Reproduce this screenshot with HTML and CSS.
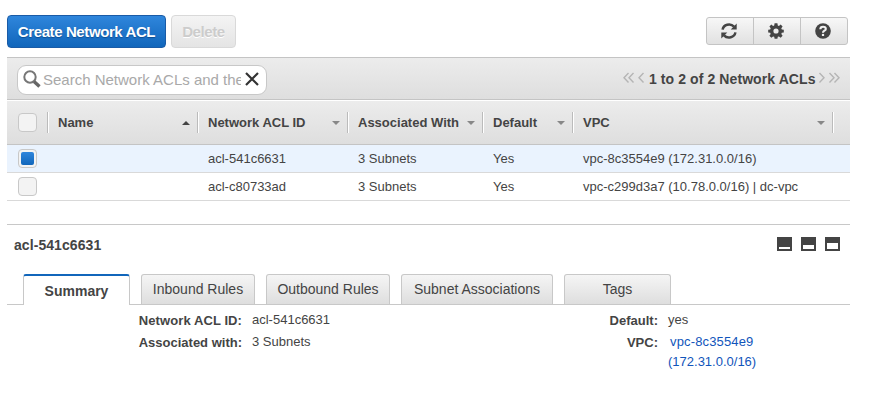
FILE: index.html
```html
<!DOCTYPE html>
<html lang="en">
<head>
<meta charset="utf-8">
<title>Network ACLs</title>
<link rel="stylesheet" href="styles.css">
</head>
<body>
<main class="console">
  <header class="actions">
    <button class="btn btn-primary">Create Network ACL</button>
    <button class="btn btn-disabled" disabled>Delete</button>
    <div class="tools">
      <button class="tool" aria-label="Refresh"><svg width="16" height="16" viewBox="0 0 16 16"><path d="M1.600 6.600A6.500 6 0 0 1 13 3.600M14.400 9.400A6.500 6 0 0 1 3 12.400" fill="none" stroke="#444" stroke-width="2.500"/><path d="M15.700 .6V6.600H9.700zM.3 15.400V9.400h6z" fill="#444"/></svg></button>
      <button class="tool" aria-label="Settings"><svg width="16" height="16" viewBox="0 0 16 16"><path fill="#444" fill-rule="evenodd" d="M6.600.3h2.800l.4 2.100 1.100.5 1.800-1.300 1.900 1.900-1.300 1.800.5 1.100 2 .4v2.600l-2 .4-.5 1.200 1.300 1.700-1.900 2-1.800-1.300-1.100.4-.4 2H6.600l-.4-2-1.100-.4-1.800 1.300-1.900-2L2.700 11l-.5-1.200-2-.4V6.800l2-.4.5-1.100-1.300-1.800 1.900-1.900 1.800 1.300 1.100-.5zM8 5.400a2.600 2.600 0 1 0 0 5.200 2.600 2.600 0 0 0 0-5.200z"/></svg></button>
      <button class="tool" aria-label="Help"><svg width="16" height="16" viewBox="0 0 16 16"><circle cx="8" cy="8" r="7.800" fill="#444"/><path d="M5.300 6.200C5.400 4.300 6.500 3.700 8 3.700c1.700 0 2.800.8 2.800 2.200C10.800 7.700 8 7.700 8 9.700" fill="none" stroke="#f1f1f1" stroke-width="2.100"/><path d="M6.900 10.900h2.200v2.100H6.900z" fill="#f1f1f1"/></svg></button>
    </div>
  </header>

  <section class="filterbar">
    <label class="search">
      <svg class="magnifier" width="18" height="18" viewBox="0 0 18 18"><circle cx="7" cy="7" r="5.700" fill="none" stroke="#777" stroke-width="2"/><path d="M11 11.500l5.500 5" stroke="#666" stroke-width="3.400"/></svg>
      <span class="placeholder">Search Network ACLs and their</span>
      <svg class="clear" width="14" height="14" viewBox="0 0 14 14"><path d="M1 1l12 12M13 1L1 13" stroke="#333" stroke-width="2.200"/></svg>
    </label>
    <div class="pager">
      <svg width="22" height="12" viewBox="0 0 22 12"><path d="M5.500 1L1 5.700l4.500 4.700M10.500 1L6 5.700l4.500 4.700M20.500 1L16 5.700l4.500 4.700"/></svg>
      <span class="range">1 to 2 of 2 Network ACLs</span>
      <svg width="22" height="12" viewBox="0 0 22 12"><path d="M1.500 1L6 5.700l-4.500 4.700M11.500 1L16 5.700l-4.500 4.700M16.500 1L21 5.700l-4.500 4.700"/></svg>
    </div>
  </section>

  <section class="grid">
    <div class="row head">
      <div class="cell check"><i class="box"></i></div>
      <div class="cell"><span>Name</span><i class="arrow up"></i></div>
      <div class="cell"><span>Network ACL ID</span><i class="arrow"></i></div>
      <div class="cell"><span>Associated With</span><i class="arrow"></i></div>
      <div class="cell"><span>Default</span><i class="arrow"></i></div>
      <div class="cell"><span>VPC</span><i class="arrow"></i></div>
    </div>
    <div class="row selected">
      <div class="cell check"><i class="box on"></i></div>
      <div class="cell"></div>
      <div class="cell">acl-541c6631</div>
      <div class="cell">3 Subnets</div>
      <div class="cell">Yes</div>
      <div class="cell">vpc-8c3554e9 (172.31.0.0/16)</div>
    </div>
    <div class="row">
      <div class="cell check"><i class="box"></i></div>
      <div class="cell"></div>
      <div class="cell">acl-c80733ad</div>
      <div class="cell">3 Subnets</div>
      <div class="cell">Yes</div>
      <div class="cell">vpc-c299d3a7 (10.78.0.0/16) | dc-vpc</div>
    </div>
  </section>

  <section class="detail">
    <div class="titlebar">
      <h2>acl-541c6631</h2>
      <div class="sizes"><i class="pane low"></i><i class="pane mid"></i><i class="pane high"></i></div>
    </div>
    <nav class="tabs">
      <a class="tab active">Summary</a>
      <a class="tab inbound">Inbound Rules</a>
      <a class="tab outbound">Outbound Rules</a>
      <a class="tab subnets">Subnet Associations</a>
      <a class="tab tags">Tags</a>
    </nav>
    <div class="facts">
      <dl>
        <dt class="wide">Network ACL ID:</dt><dd>acl-541c6631</dd>
        <dt>Associated with:</dt><dd>3 Subnets</dd>
      </dl>
      <dl>
        <dt>Default:</dt><dd>yes</dd>
        <dt>VPC:</dt><dd class="link"><a><span class="lead">vpc-8c3554e9</span><br>(172.31.0.0/16)</a></dd>
      </dl>
    </div>
  </section>
</main>
</body>
</html>
```
FILE: styles.css
```css
* { box-sizing: border-box; }
body {
  margin: 0;
  background: #fff;
  color: #444;
  font: 13px/20px "Liberation Sans", Arial, sans-serif;
}
.console { width: 843px; margin-left: 7px; padding-top: 15px; }
span { white-space: nowrap; }

.actions { display: flex; height: 42px; align-items: flex-start; }
.btn {
  height: 33px;
  padding: 0;
  border-radius: 4px;
  font: bold 15px/31px "Liberation Sans", Arial, sans-serif;
  letter-spacing: -0.4px;
}
.btn-primary {
  width: 159px;
  margin-right: 5px;
  color: #fff;
  border: 1px solid #1a5ba6;
  background: linear-gradient(#2f86dc, #1166bb);
  text-shadow: 0 1px 1px #0d4d91;
}
.btn-disabled {
  width: 65px;
  color: #ccc;
  border: 1px solid #d9d9d9;
  background: linear-gradient(#f4f4f4, #e4e4e4);
  text-shadow: 0 1px 0 #fff;
}
.tools {
  display: flex;
  width: 142px;
  height: 28px;
  margin: 2px 2px 0 auto;
  border: 1px solid #c4c4c4;
  border-radius: 3px;
  background: linear-gradient(#f7f7f7, #e1e1e1);
}
.tool {
  flex: 1;
  display: flex;
  align-items: center;
  justify-content: center;
  padding: 0 2px 0 0;
  border: 0;
  background: none;
}
.tool + .tool { border-left: 1px solid #c4c4c4; }

.filterbar {
  display: flex;
  align-items: flex-start;
  height: 43px;
  padding: 7px 10px 0;
  border-top: 1px solid #c4c4c4;
  border-bottom: 1px solid #c4c4c4;
  background: linear-gradient(#ececec, #dedede);
}
.search {
  display: flex;
  align-items: center;
  width: 250px;
  height: 30px;
  padding: 0 7px 1px 5px;
  border: 1px solid #c8c8c8;
  border-radius: 9px;
  background: #fff;
}
.magnifier { flex: none; margin: 0 2px 1px 0; }
.placeholder { width: 198px; overflow: hidden; font-size: 15px; color: #a9a9a9; }
.clear { flex: none; margin: 0 0 2px 4px; }
.pager { display: flex; align-items: center; height: 28px; margin: 0 0 0 auto; }
.pager svg { fill: none; stroke: #b5b5b5; stroke-width: 1.4; margin-bottom: 2px; }
.range { width: 167px; margin: 0 2px 0 4px; font-weight: bold; font-size: 14px; letter-spacing: 0.09px; }

.row {
  display: grid;
  grid-template-columns: 42px 150px 150px 135px 90px 260px;
  height: 28px;
  border-bottom: 1px solid #d9d9d9;
}
.selected { background: #eaf3fe; }
.cell { display: flex; align-items: center; padding-left: 9px; white-space: pre; }
.check { padding-left: 11px; }
.head {
  height: 45px;
  padding-bottom: 1px;
  border-top: 1px solid #fff;
  border-bottom-color: #c4c4c4;
  background: linear-gradient(#ececec, #dedede);
  font-weight: bold;
  align-items: center;
}
.head .cell { height: 21px; padding-right: 8px; border-right: 1px solid #fff; box-shadow: inset -1px 0 #bbb; }
.head span { padding-top: 2px; }
.arrow {
  margin: 1px 0 0 auto;
  border: 4px solid transparent;
  border-top-color: #888;
  border-bottom: 0;
}
.arrow.up { border-top: 0; border-bottom: 4px solid #444; }
.box {
  flex: none;
  display: grid;
  place-items: center;
  width: 19px;
  height: 19px;
  border: 1px solid #c8c8c8;
  border-radius: 4px;
  background: #f3f3f3;
}
.box.on::before {
  content: "";
  width: 13px;
  height: 13px;
  border-radius: 2px;
  background: linear-gradient(#2f86dc, #1166bb);
}

.detail { margin-top: 23px; border-top: 1px solid #c8c8c8; }
.titlebar { display: flex; justify-content: space-between; height: 49px; padding: 10px 10px 0 7px; }
h2 { margin: 0; font-size: 14px; line-height: 20px; letter-spacing: 0.07px; }
.sizes { display: flex; gap: 9px; padding-top: 2px; }
.pane { width: 15px; height: 14px; border: 2px solid #444; }
.low { border-top-width: 10px; }
.mid { border-top-width: 8px; }
.high { border-top-width: 6px; }
.tabs { display: flex; gap: 11px; height: 31px; padding-left: 16px; border-bottom: 1px solid #c8c8c8; }
.tab {
  height: 30px;
  border: 1px solid #c8c8c8;
  border-bottom: 0;
  border-radius: 3px 3px 0 0;
  background: linear-gradient(#f5f5f5, #dedede);
  font-size: 14px;
  line-height: 29px;
  text-align: center;
}
.active {
  width: 107px;
  height: 31px;
  border-top: 2px solid #1166bb;
  background: #fff;
  font-weight: bold;
  line-height: 31px;
}
.inbound { width: 114px; }
.outbound { width: 124px; }
.subnets { width: 152px; }
.tags { width: 107px; }
.facts { display: grid; grid-template-columns: 416px 427px; padding-top: 5px; }
dl {
  display: grid;
  grid-template-columns: 235px auto;
  gap: 2px 10px;
  margin: 0;
  align-content: start;
}
dt { height: 20px; padding-top: 1px; font-weight: bold; text-align: right; }
.wide { letter-spacing: 0.09px; }
dd { margin: 0; }
.link { color: #1155bb; }
.lead { padding-left: 2px; letter-spacing: 0.15px; }
```
